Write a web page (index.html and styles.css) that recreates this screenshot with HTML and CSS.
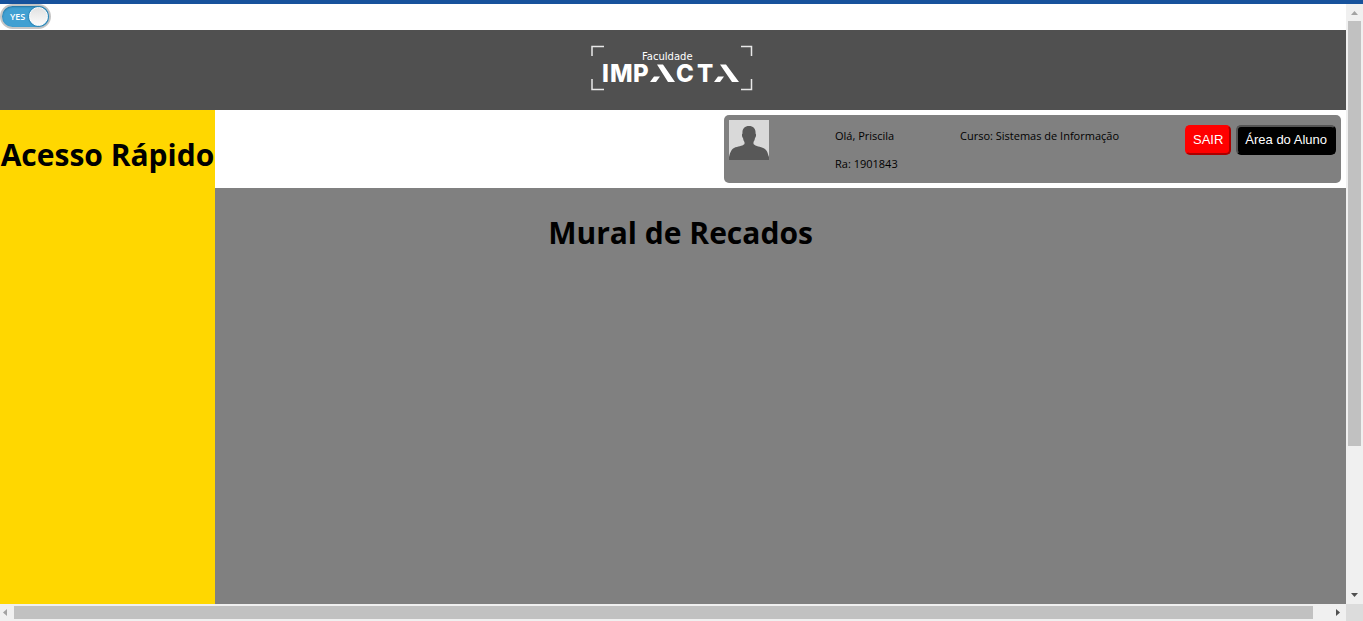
FILE: index.html
```html
<!DOCTYPE html>
<html lang="pt-BR">
<head>
<meta charset="utf-8">
<meta name="viewport" content="width=device-width, initial-scale=1">
<title>Faculdade Impacta</title>
<link rel="stylesheet" href="styles.css">
</head>
<body>
<div class="window">
  <div class="page">
    <div class="switch-row">
      <label class="switch">
        <input class="switch-input" type="checkbox" checked aria-label="Tema">
        <span class="switch-track"><span class="switch-text">YES</span><span class="switch-knob"></span></span>
      </label>
    </div>
    <header class="brand">
      <svg class="logo" width="166" height="48" viewBox="0 0 166 48" role="img" aria-label="Faculdade Impacta">
        <path class="logo-corner" d="M2 12V2.500H14M151 2.500H161.500V12M2 35V45.500H14M151 45.500H161.500V35"/>
        <text class="logo-small" x="52" y="16">Faculdade</text>
        <text class="logo-word"><tspan x="12" y="38">I</tspan><tspan x="20" y="38">M</tspan><tspan x="43" y="38">P</tspan><tspan x="86" y="38">C</tspan><tspan x="107" y="38">T</tspan></text>
        <path class="logo-mark" d="M67 20.500H73L85 38H78ZM64 32.500H70L66 38H60ZM130 20.500H136L149 38H142ZM128 32.500H134L130 38H124Z"/>
      </svg>
    </header>
    <div class="content">
      <aside class="quick"><h1 class="title">Acesso Rápido</h1></aside>
      <main class="main">
        <div class="user-row">
          <section class="user-card">
            <svg class="avatar" width="40" height="40" viewBox="0 0 40 40" role="img" aria-label="Foto do aluno">
              <path fill="#d9d9d9" d="M0 0H40V40H0Z"/>
              <path fill="#585858" d="M20 6C24.500 6 27 9 26.500 13.500C27.500 14 27 17 26 18C25.800 20 25 21 24.500 22V24C27 27 34 26.500 37 30C39 32.500 39 35 40 37V40H0V37C1 34 1.500 30 5 28C9 26 13 26.500 15.500 24V22C14.700 21 14.200 19.500 14 18C13 17 12.500 14 13.500 13.500C13 9 15.500 6 20 6Z"/>
            </svg>
            <div class="user-data"><p class="line">Olá, Priscila</p><p class="line">Ra: 1901843</p></div>
            <p class="line course">Curso: Sistemas de Informação</p>
            <div class="actions">
              <button class="button button-exit" type="button">SAIR</button>
              <button class="button button-area" type="button">Área do Aluno</button>
            </div>
          </section>
        </div>
        <section class="board"><h1 class="title">Mural de Recados</h1></section>
      </main>
    </div>
  </div>
  <div class="bar bar-vertical" aria-hidden="true">
    <svg width="17" height="17" viewBox="0 0 17 17"><path fill="#a3a3a3" d="M5 11L8.500 7L12 11Z"/></svg>
    <div class="rail"><div class="thumb thumb-vertical"></div></div>
    <svg width="17" height="17" viewBox="0 0 17 17"><path fill="#505050" d="M5 6H12L8.500 10Z"/></svg>
  </div>
  <div class="bar bar-horizontal" aria-hidden="true">
    <svg width="14" height="17" viewBox="0 0 14 17"><path fill="#a3a3a3" d="M7 5V12L3 8.500Z"/></svg>
    <div class="rail"><div class="thumb thumb-horizontal"></div></div>
    <svg width="17" height="17" viewBox="0 0 17 17"><path fill="#505050" d="M7 5V12L11 8.500Z"/></svg>
  </div>
  <div class="corner"></div>
</div>
</body>
</html>
```
FILE: styles.css
```css
* { box-sizing: border-box; }
body {
  margin: 0;
  font-family: "Open Sans", "Noto Sans", sans-serif;
  color: #000;
  background: #fff;
}
.window {
  display: grid;
  grid-template-columns: minmax(0, 1fr) 17px;
  grid-template-rows: minmax(0, 1fr) 17px;
  height: 100vh;
  border-top: 4px solid #17529c;
}
.page { display: flex; flex-direction: column; overflow: hidden; }

.switch-row { height: 26px; flex: none; }
.switch { display: block; width: 51px; position: relative; }
.switch-input { position: absolute; inset: 0; margin: 0; opacity: 0; }
.switch-track {
  display: flex;
  align-items: center;
  justify-content: space-between;
  height: 25px;
  padding: 0 0 0 8px;
  border: 2px solid #c6c6c6;
  border-radius: 13px;
  background: #41a0d2;
  box-shadow: inset 0 1px 2px #1f6f9c;
}
.switch-text { font-size: 9px; font-weight: 600; line-height: 20px; color: #fff; }
.switch-knob {
  width: 19px;
  height: 19px;
  margin-right: 1px;
  border: 1px solid #fff;
  border-radius: 50%;
  background: linear-gradient(#e2e2e2, #fbfbfb);
  box-shadow: 0 0 1px 1px #2f86b5;
}

.brand {
  display: flex;
  flex: none;
  align-items: center;
  justify-content: center;
  height: 80px;
  padding-bottom: 4px;
  background: #505050;
}
.logo-corner { fill: none; stroke: #e8e8e8; stroke-width: 1.5; }
.logo-small { font: 10px "DejaVu Sans", sans-serif; fill: #fff; }
.logo-word { font: 800 24px Inter, sans-serif; fill: #fff; }
.logo-mark { fill: #fff; }

.content { display: flex; flex: 1; min-height: 0; }
.title { margin: 0; font-size: 30px; line-height: 44px; font-weight: 700; white-space: nowrap; }
.quick {
  display: flex;
  justify-content: center;
  align-items: flex-start;
  flex: none;
  width: 215px;
  padding-top: 23px;
  background: #ffd700;
}
.main { display: flex; flex-direction: column; flex: 1; min-width: 0; }
.user-row { display: flex; justify-content: flex-end; padding: 5px; }
.user-card {
  display: flex;
  align-items: flex-start;
  width: 617px;
  height: 68px;
  padding: 5px;
  border-radius: 5px;
  background: #808080;
}
.user-data { width: 125px; margin-left: 66px; padding-top: 2px; }
.line { margin: 0; font-size: 11px; line-height: 28px; white-space: nowrap; }
.course { padding-top: 2px; }
.actions { display: flex; gap: 5px; margin-left: auto; padding-top: 5px; }
.button {
  height: 30px;
  padding: 0 6px 2px;
  border: 2px outset;
  border-radius: 5px;
  font: 13px "Liberation Sans", Arial, sans-serif;
  color: #fff;
  white-space: nowrap;
}
.button-exit { border-color: #f00; background: #f00; }
.button-area { padding: 0 7px 2px; border-color: #000; background: #000; }
.board {
  display: flex;
  flex: 1;
  justify-content: center;
  align-items: flex-start;
  padding: 23px 200px 0 0;
  background: #808080;
}

.bar { display: flex; background: #f0f0f0; }
.bar-vertical { flex-direction: column; }
.bar svg { flex: none; }
.rail { flex: 1; min-width: 0; min-height: 0; }
.thumb { background: #c1c1c1; }
.thumb-vertical { width: 13px; height: 75%; margin-left: 2px; }
.thumb-horizontal { width: calc(100% - 16px); height: 13px; margin-top: 2px; }
.corner { background: #dcdcdc; }
```
